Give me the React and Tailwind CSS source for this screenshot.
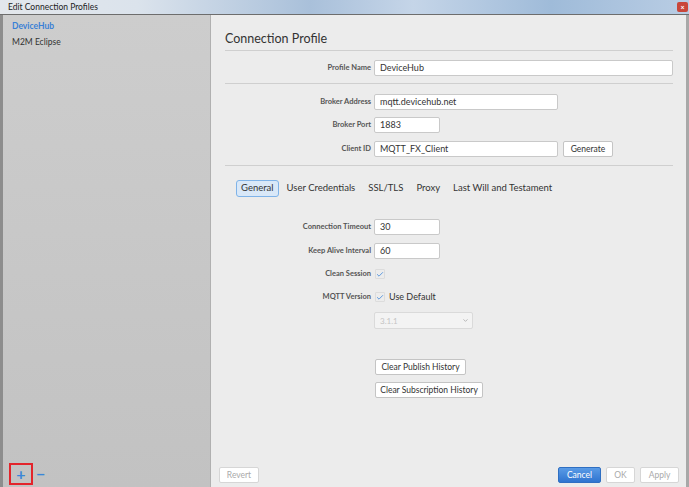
import { Check, ChevronDown } from 'lucide-react'

const font = { fontFamily: 'Lato, "Open Sans", sans-serif' }

function Label({ children }) {
  return (
    <div className="w-[149px] shrink-0 pr-[3px] text-right text-[7.5px] font-bold text-[#555]">
      {children}
    </div>
  )
}

function Field({ value, width }) {
  return (
    <div
      className={`h-[16px] ${width} flex items-center rounded-[2px] border border-[#c9c9c9] bg-white px-[5px] text-[9px] text-[#333]`}
    >
      {value}
    </div>
  )
}

function Box() {
  return (
    <div className="ml-[1px] flex h-[10px] w-[10px] items-center justify-center rounded-[1px] border border-[#dcdcdc]">
      <Check size={9} strokeWidth={2.4} className="text-[#3d87d9]" />
    </div>
  )
}

function Btn({ children, className = '' }) {
  return (
    <div
      className={`flex h-[16px] items-center justify-center whitespace-nowrap rounded-[2px] border border-[#c4c4c4] bg-white text-[8.5px] text-[#333] ${className}`}
    >
      {children}
    </div>
  )
}

export default function App() {
  return (
    <div className="flex h-[487px] w-[689px] flex-col overflow-hidden bg-[#ececec]" style={font}>
      {/* title bar */}
      <div className="flex h-[15px] items-center justify-between border-b border-[#6d6d6d] bg-[linear-gradient(90deg,#e3e7ec_0%,#dbe3ec_20%,#a9c0da_45%,#c5d5e8_60%,#9fbbd9_80%,#b9cde4_100%)] pl-[8px]">
        <span className="text-[8.5px] text-[#222]">Edit Connection Profiles</span>
        <div className="mr-[1px] flex h-[10px] w-[11px] items-center justify-center rounded-[2px] bg-[#c9463a] text-[7px] font-bold leading-none text-white">
          ×
        </div>
      </div>

      <div className="flex flex-1">
        {/* sidebar */}
        <div className="flex w-[211px] shrink-0 flex-col border-l-[3px] border-[#8d8d8d] border-r border-r-[#b0b0b0] bg-[linear-gradient(180deg,#cdcdcd_0%,#c2c2c2_100%)]">
          <div className="pl-[9px] pt-[3px] text-[8.5px]">
            <div className="h-[16px] leading-[16px] font-bold text-[#3a80d6]">DeviceHub</div>
            <div className="h-[16px] leading-[16px] text-[#333]">M2M Eclipse</div>
          </div>
          <div className="flex-1" />
          <div className="mb-[2px] ml-[6px] flex items-center">
            <div className="flex h-[22px] w-[24px] items-center justify-center border-2 border-[#e3242b] text-[16px] font-bold leading-none text-[#3a86d8]">
              +
            </div>
            <div className="ml-[3px] text-[16px] font-bold leading-none text-[#3a86d8]">−</div>
          </div>
        </div>

        {/* main panel */}
        <div className="flex flex-1 flex-col border-r-[3px] border-[#a8a8a8] pl-[14px] pr-[13px] pb-[4px]">
          <div className="mt-[16px] h-[16px] text-[12.5px] leading-[16px] text-[#333]">Connection Profile</div>
          <div className="mt-[3px] border-b border-[#cfcfcf]" />

          <div className="mt-[9px] flex items-center">
            <Label>Profile Name</Label>
            <Field value="DeviceHub" width="flex-1" />
          </div>
          <div className="mt-[7px] border-b border-[#cfcfcf]" />

          <div className="mt-[10px] flex items-center">
            <Label>Broker Address</Label>
            <Field value="mqtt.devicehub.net" width="w-[184px]" />
          </div>
          <div className="mt-[7px] flex items-center">
            <Label>Broker Port</Label>
            <Field value="1883" width="w-[66px]" />
          </div>
          <div className="mt-[8px] flex items-center">
            <Label>Client ID</Label>
            <Field value="MQTT_FX_Client" width="w-[184px]" />
            <Btn className="ml-[5px] w-[50px]">Generate</Btn>
          </div>
          <div className="mt-[8px] border-b border-[#cfcfcf]" />

          <div className="ml-[11px] mt-[14px] flex items-center text-[9.5px] text-[#333]">
            <div className="flex h-[17px] items-center rounded-[3px] border border-[#7fb3e8] bg-[#d9e8f8] px-[4px]">
              General
            </div>
            <span className="ml-[8px]">User Credentials</span>
            <span className="ml-[13px]">SSL/TLS</span>
            <span className="ml-[13px]">Proxy</span>
            <span className="ml-[13px]">Last Will and Testament</span>
          </div>

          <div className="mt-[22px] flex items-center">
            <Label>Connection Timeout</Label>
            <Field value="30" width="w-[66px]" />
          </div>
          <div className="mt-[8px] flex items-center">
            <Label>Keep Alive Interval</Label>
            <Field value="60" width="w-[66px]" />
          </div>
          <div className="mt-[7px] flex h-[16px] items-center">
            <Label>Clean Session</Label>
            <Box />
          </div>
          <div className="mt-[7px] flex h-[16px] items-center">
            <Label>MQTT Version</Label>
            <Box />
            <span className="ml-[4px] text-[9px] text-[#333]">Use Default</span>
          </div>
          <div className="mt-[7px] flex">
            <div className="w-[149px] shrink-0" />
            <div className="flex h-[17px] w-[99px] items-center justify-between rounded-[2px] border border-[#dadada] bg-[#f3f3f3] pl-[5px] pr-[3px] text-[8px] text-[#c4c4c4]">
              3.1.1
              <ChevronDown size={7} strokeWidth={3} className="text-[#b0b0b0]" />
            </div>
          </div>

          <div className="mt-[30px] flex">
            <div className="w-[150px] shrink-0" />
            <Btn className="w-[91px]">Clear Publish History</Btn>
          </div>
          <div className="mt-[7px] flex">
            <div className="w-[150px] shrink-0" />
            <Btn className="w-[108px]">Clear Subscription History</Btn>
          </div>

          <div className="flex-1" />

          <div className="-ml-[6px] -mr-[6px] flex items-center">
            <Btn className="w-[40px] border-[#d6d6d6] bg-[#f1f1f1] text-[#aaa]">Revert</Btn>
            <div className="flex-1" />
            <div className="flex h-[16px] w-[43px] items-center justify-center rounded-[2px] border border-[#2f6fc2] bg-[linear-gradient(180deg,#5a9be6_0%,#2f74d0_100%)] text-[8.5px] text-white">
              Cancel
            </div>
            <Btn className="ml-[5px] w-[29px] border-[#d6d6d6] bg-[#f1f1f1] text-[#aaa]">OK</Btn>
            <Btn className="ml-[5px] w-[39px] border-[#d6d6d6] bg-[#f1f1f1] text-[#aaa]">Apply</Btn>
          </div>
        </div>
      </div>
    </div>
  )
}
